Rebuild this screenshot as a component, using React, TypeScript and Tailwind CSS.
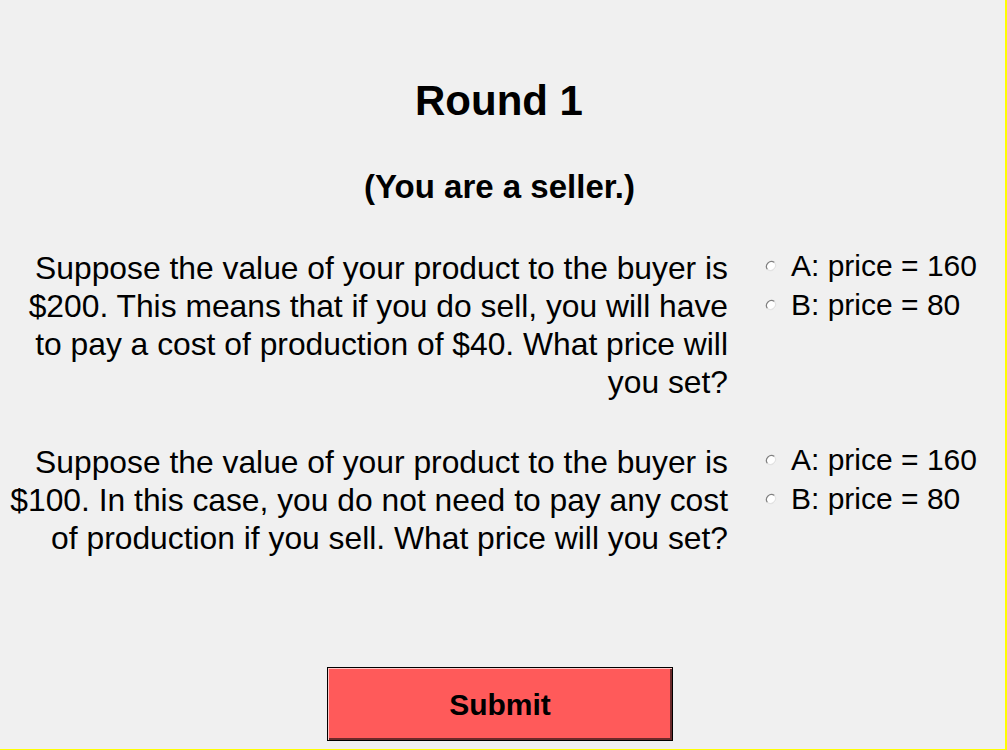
import React from "react";

const Radio = () => (
  <svg width="12" height="12" viewBox="0 0 12 12" className="shrink-0">
    <circle cx="6" cy="6" r="5" fill="#ffffff" />
    <path d="M2.5 9.5 A5 5 0 0 1 9.5 2.5" fill="none" stroke="#808080" strokeWidth="1.2" />
    <path d="M9.5 2.5 A5 5 0 0 1 2.5 9.5" fill="none" stroke="#e3e3e3" strokeWidth="1.2" />
  </svg>
);

function Question({ lines, options }: { lines: string[]; options: string[] }) {
  return (
    <div className="flex items-start">
      <div className="w-[728px] text-right text-[31.8px] leading-[38px] whitespace-nowrap">
        {lines.map((l) => (
          <div key={l}>{l}</div>
        ))}
      </div>
      <div className="ml-[37px] mt-[-3px] flex flex-col">
        {options.map((o) => (
          <label key={o} className="flex items-center gap-[14px] text-[30px] leading-[39px]">
            <Radio />
            <span>{o}</span>
          </label>
        ))}
      </div>
    </div>
  );
}

export default function App() {
  return (
    <div
      className="w-[1007px] h-[750px] bg-[#f0f0f0] border-r-2 border-b border-[#ffff00] text-black flex flex-col"
      style={{ fontFamily: '"Liberation Sans", Arial, sans-serif' }}
    >
      <h1 className="mt-[77px] pr-[7px] text-center text-[42px] leading-[48px] font-bold">Round 1</h1>
      <h2 className="mt-[43px] pr-[6px] text-center text-[33px] leading-[38px] font-bold">(You are a seller.)</h2>
      <div className="mt-[43px] flex flex-col gap-[42px]">
        <Question
          lines={[
            "Suppose the value of your product to the buyer is",
            "$200. This means that if you do sell, you will have",
            "to pay a cost of production of $40. What price will",
            "you set?",
          ]}
          options={["A: price = 160", "B: price = 80"]}
        />
        <Question
          lines={[
            "Suppose the value of your product to the buyer is",
            "$100. In this case, you do not need to pay any cost",
            "of production if you sell. What price will you set?",
          ]}
          options={["A: price = 160", "B: price = 80"]}
        />
      </div>
      <div className="mt-auto mb-[8px] pr-[5px] flex justify-center">
        <button className="w-[346px] h-[74px] bg-[#ff5a5a] border border-black shadow-[inset_1px_1px_0_#ffc8c8,inset_-2px_-2px_0_#6b2a2a] text-[30px] font-bold">
          Submit
        </button>
      </div>
    </div>
  );
}
